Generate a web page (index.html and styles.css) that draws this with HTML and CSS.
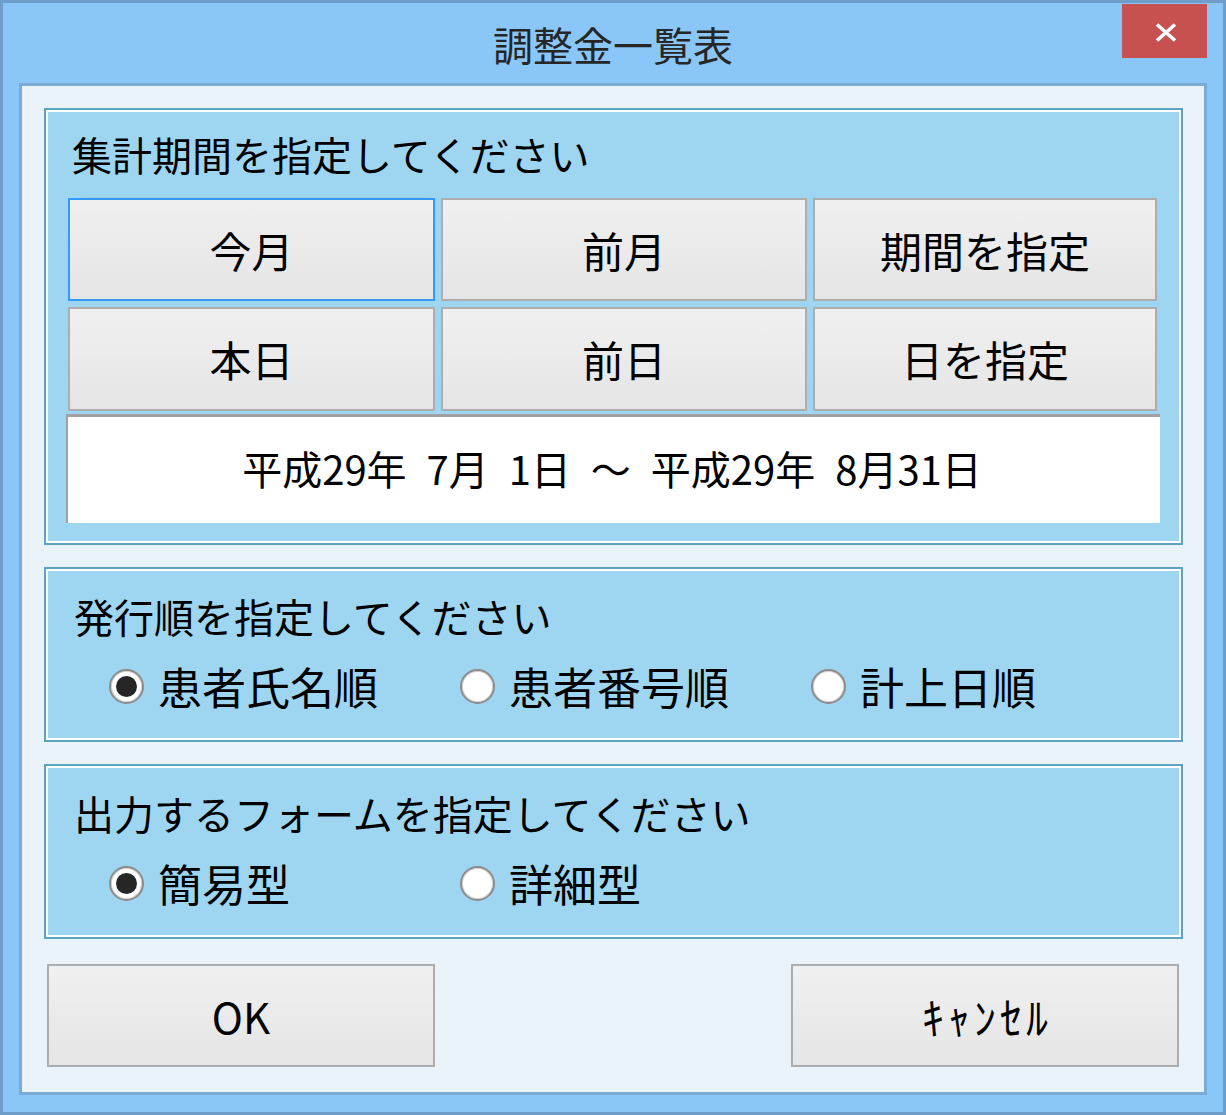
FILE: index.html
```html
<!DOCTYPE html>
<html lang="ja">
<head>
<meta charset="utf-8">
<title>調整金一覧表</title>
<link rel="stylesheet" href="styles.css">
</head>
<body>
<div class="window">
  <div class="titlebar">
    <div class="title">調整金一覧表</div>
    <div class="close">
      <svg width="22" height="19" viewBox="0 0 22 19"><path d="M2 1.5 L20 17.5 M20 1.5 L2 17.5" stroke="#fff" stroke-width="3.6" fill="none"/></svg>
    </div>
  </div>
  <div class="client">
    <section class="group group-period">
      <div class="group-label label-period">集計期間を指定してください</div>
      <div class="btn-grid">
        <div class="btn focused">今月</div>
        <div class="btn">前月</div>
        <div class="btn">期間を指定</div>
        <div class="btn">本日</div>
        <div class="btn">前日</div>
        <div class="btn">日を指定</div>
      </div>
      <div class="date-box">平成29年 7月 1日 ～ 平成29年 8月31日</div>
    </section>
    <section class="group group-small">
      <div class="group-label">発行順を指定してください</div>
      <div class="radio-row">
        <div class="radio checked"><span class="circle"><span class="dot"></span></span><span class="rtext">患者氏名順</span></div>
        <div class="radio"><span class="circle"></span><span class="rtext">患者番号順</span></div>
        <div class="radio"><span class="circle"></span><span class="rtext">計上日順</span></div>
      </div>
    </section>
    <section class="group group-small">
      <div class="group-label">出力するフォームを指定してください</div>
      <div class="radio-row">
        <div class="radio checked"><span class="circle"><span class="dot"></span></span><span class="rtext">簡易型</span></div>
        <div class="radio"><span class="circle"></span><span class="rtext">詳細型</span></div>
      </div>
    </section>
    <div class="actions">
      <div class="btn action">OK</div>
      <div class="btn action cancel">ｷｬﾝｾﾙ</div>
    </div>
  </div>
</div>
</body>
</html>
```
FILE: styles.css
```css
* { box-sizing: border-box; margin: 0; padding: 0; }
html, body { width: 1226px; height: 1115px; overflow: hidden; }
body {
  font-family: "Noto Sans CJK JP", "Noto Sans", sans-serif;
  color: #000;
  background: #8ac7f8;
}
.window {
  width: 1226px;
  height: 1115px;
  border: 3px solid #6d9dc8;
  background: #8ac7f8;
  display: flex;
  flex-direction: column;
}
.titlebar {
  height: 80px;
  position: relative;
  display: flex;
  justify-content: center;
  align-items: center;
}
.title {
  font-size: 40px;
  line-height: 40px;
  color: #262626;
  margin-top: 2px;
}
.close {
  position: absolute;
  top: 1px;
  right: 16px;
  width: 85px;
  height: 54px;
  background: #c75050;
  display: flex;
  align-items: center;
  justify-content: center;
  padding-left: 3px;
  padding-top: 2px;
}
.client {
  margin: 0 16px;
  height: 1012px;
  border: 3px solid #7aabd4;
  background: #eaf3fa;
  padding: 22px 21px 0 22px;
}
.group {
  border: 2px solid #5aa4bf;
  box-shadow: inset 0 0 0 2px #fff;
  background: #9ed6f1;
}
.group + .group { margin-top: 22px; }
.group-period { height: 437px; padding-top: 24px; }
.group-small { height: 175px; padding-top: 27px; }
.group-label {
  font-size: 40px;
  line-height: 40px;
  height: 40px;
  white-space: nowrap;
  margin-left: 28px;
}
.label-period { margin-left: 26px; }
.btn-grid {
  margin: 24px 0 0 22px;
  display: grid;
  grid-template-columns: 367px 366px 344px;
  grid-template-rows: 103px 104px;
  column-gap: 6px;
  row-gap: 6px;
}
.btn {
  border: 2px solid #adadad;
  background: linear-gradient(#f0f0f0, #e5e5e5);
  display: flex;
  align-items: center;
  justify-content: center;
  font-size: 42px;
  line-height: 42px;
  white-space: nowrap;
}
.btn.focused { border-color: #3399ff; }
.date-box {
  margin: 3px 0 0 20px;
  width: 1094px;
  height: 109px;
  background: #fff;
  border-top: 3px solid #a0a0a0;
  border-left: 2px solid #a0a0a0;
  display: flex;
  align-items: center;
  justify-content: center;
  font-size: 40px;
  line-height: 40px;
  white-space: pre;
  word-spacing: 11px;
  padding-right: 4px;
  padding-bottom: 5px;
}
.radio-row {
  display: flex;
  margin: 30px 0 0 63px;
  height: 40px;
}
.radio {
  width: 351px;
  display: flex;
  align-items: center;
  height: 40px;
}
.circle {
  width: 35px;
  height: 35px;
  border-radius: 50%;
  border: 2px solid #8c8c8c;
  background: #fff;
  box-shadow: inset 0 0 0 1px #d4d4d4;
  display: flex;
  align-items: center;
  justify-content: center;
  margin-top: 1px;
  flex: none;
}
.dot {
  width: 21px;
  height: 21px;
  border-radius: 50%;
  background: #262626;
}
.rtext {
  font-size: 44px;
  line-height: 44px;
  margin-left: 14px;
  white-space: nowrap;
}
.actions {
  margin-top: 25px;
  padding: 0 4px 0 3px;
  display: flex;
  justify-content: space-between;
}
.btn.action {
  width: 388px;
  height: 103px;
}
.btn.cancel {
  font-size: 44px;
  letter-spacing: 4px;
  padding-left: 4px;
}
```
